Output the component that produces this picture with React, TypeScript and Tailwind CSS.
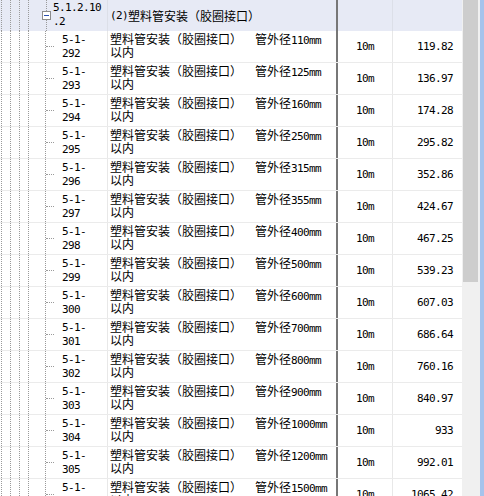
import React from "react";

const rows = [
  ["292", "110", "119.82"],
  ["293", "125", "136.97"],
  ["294", "160", "174.28"],
  ["295", "250", "295.82"],
  ["296", "315", "352.86"],
  ["297", "355", "424.67"],
  ["298", "400", "467.25"],
  ["299", "500", "539.23"],
  ["300", "600", "607.03"],
  ["301", "700", "686.64"],
  ["302", "800", "760.16"],
  ["303", "900", "840.97"],
  ["304", "1000", "933"],
  ["305", "1200", "992.01"],
  ["306", "1500", "1065.42"],
];

const MONO = "font-['DejaVu_Sans_Mono',monospace] text-[11px] tracking-[-0.62px] leading-[13px]";
const CJK = "font-['Noto_Sans_CJK_SC',sans-serif] text-[12px] leading-[13px]";

function Guides() {
  return (
    <>
      <div className="w-[1px] shrink-0" />
      <div className="w-[9px] shrink-0 h-full border-l border-dotted border-[#9a9a9a]" />
      <div className="w-[9px] shrink-0 h-full border-l border-dotted border-[#9a9a9a]" />
      <div className="w-[9px] shrink-0 h-full border-l border-dotted border-[#9a9a9a]" />
      <div className="w-[17px] shrink-0 h-full border-l border-dotted border-[#9a9a9a]" />
    </>
  );
}

function Row({ code, size, price }: { code: string; size: string; price: string }) {
  return (
    <div className="flex h-[32px] shrink-0 border-b border-[#ebebeb] bg-white text-black">
      <div className="flex w-[108px] shrink-0 h-full border-r border-[#e8e8e8]">
        <Guides />
        <div className="w-[17px] shrink-0 h-full border-l border-dotted border-[#9a9a9a] flex items-center">
          <div className="w-[8px] border-t border-dotted border-[#9a9a9a]" />
        </div>
        <div className={`${MONO} pt-[2px]`}>
          <div className="h-[14px]">5-1-</div>
          <div className="h-[13px]">{code}</div>
        </div>
      </div>
      <div className="w-[228px] shrink-0 pl-[2px] pt-[1px] leading-[13px] overflow-hidden">
        <div className="h-[13px] whitespace-nowrap flex items-baseline">
          <span className={CJK}>塑料管安装（胶圈接口）</span>
          <span className={`${CJK} ml-[13px]`}>管外径</span>
          <span className={MONO}>{size}mm</span>
        </div>
        <div className={`h-[13px] ${CJK}`}>以内</div>
      </div>
      <div className="w-[2px] shrink-0 bg-[#777777]" />
      <div className={`w-[55px] shrink-0 border-r border-[#e8e8e8] flex items-center pl-[18px] ${MONO}`}>
        10m
      </div>
      <div className={`w-[68px] shrink-0 flex items-center justify-end pr-[8px] ${MONO}`}>
        {price}
      </div>
    </div>
  );
}

export default function App() {
  return (
    <div className="w-[484px] h-[496px] overflow-hidden flex bg-white">
      <div className="w-[462px] shrink-0 flex flex-col overflow-hidden">
        <div className="flex h-[31px] shrink-0 bg-[#e7eaf5] text-black">
          <div className="flex w-[108px] shrink-0 h-full border-r border-[#dcdfe8]">
            <div className="w-[1px] shrink-0" />
            <div className="w-[9px] shrink-0 h-full border-l border-dotted border-[#9a9a9a]" />
            <div className="w-[9px] shrink-0 h-full border-l border-dotted border-[#9a9a9a]" />
            <div className="w-[9px] shrink-0 h-full border-l border-dotted border-[#9a9a9a]" />
            <div className="w-[13px] shrink-0 h-full border-l border-dotted border-[#9a9a9a]" />
            <div className="w-[11px] shrink-0 h-full flex flex-col items-center">
              <div className="h-[11px] border-l border-dotted border-[#9a9a9a]" />
              <div className="w-[9px] h-[9px] border border-[#8c8c8c] bg-white flex items-center justify-center">
                <div className="w-[5px] h-[1px] bg-[#2a4fb0]" />
              </div>
              <div className="flex-1 border-l border-dotted border-[#9a9a9a]" />
            </div>
            <div className={`${MONO} pt-[1px] pl-[1px]`}>
              <div className="h-[14px]">5.1.2.10</div>
              <div className="h-[13px]">.2</div>
            </div>
          </div>
          <div className="w-[228px] shrink-0 pl-[2px] flex items-center whitespace-nowrap">
            <span className={MONO}>(2)</span>
            <span className={CJK}>塑料管安装（胶圈接口）</span>
          </div>
          <div className="w-[2px] shrink-0 bg-[#777777]" />
          <div className="w-[55px] shrink-0 border-r border-[#dcdfe8]" />
          <div className="w-[68px] shrink-0" />
        </div>
        {rows.map(([c, s, p]) => (
          <Row key={c} code={c} size={s} price={p} />
        ))}
      </div>
      <div className="w-[22px] shrink-0 h-full flex bg-[#f0f0f0]">
        <div className="w-[1px]" />
        <div className="w-[15px] h-[282px] bg-[#cdcdcd]" />
        <div className="w-[2px]" />
        <div className="w-[4px] h-full bg-[#a6c3ec]" />
      </div>
    </div>
  );
}
